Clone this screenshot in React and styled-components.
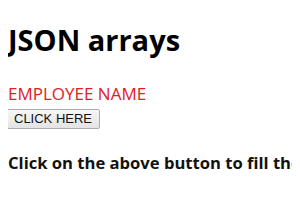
import React from "react"
import styled, { createGlobalStyle } from "styled-components"

const GlobalStyle = createGlobalStyle`
  body {
    margin: 8px;
    background: #fff;
    font-family: "Open Sans", "DejaVu Sans", sans-serif;
    overflow: hidden;
  }
`

const Page = styled.div`
  display: flex;
  flex-direction: column;
  white-space: nowrap;
`

const Title = styled.h1`
  margin: 13px 0 0;
  font-size: 29px;
  font-weight: 700;
  color: #000;
  line-height: 38px;
`

const Name = styled.p`
  margin: 23px 0 0;
  font-size: 17px;
  color: #e0201e;
  line-height: 24px;
`

const Dot = styled.span`
  display: block;
  width: 2px;
  height: 2px;
  margin: 0 0 1px -3px;
  background: #333;
`

const Button = styled.button`
  align-self: flex-start;
  box-sizing: border-box;
  height: 20px;
  margin: 0 0 0 -2px;
  padding: 0 7px;
  font-family: "Liberation Sans", Arial, sans-serif;
  font-size: 13px;
  color: #111;
  background: linear-gradient(#f7f7f7, #e3e3e3);
  border: 1px solid #acacac;
  border-radius: 2px;
  line-height: 18px;
`

const Hint = styled.p`
  margin: 22px 0 0;
  font-size: 16.6px;
  font-weight: 700;
  color: #111;
  line-height: 24px;
`

const App = () => {
  return (
    <>
      <GlobalStyle />
      <Page>
        <Title>JSON arrays</Title>
        <Name>EMPLOYEE NAME</Name>
        <Dot />
        <Button>CLICK HERE</Button>
        <Hint>Click on the above button to fill the details</Hint>
      </Page>
    </>
  )
}

export default App
